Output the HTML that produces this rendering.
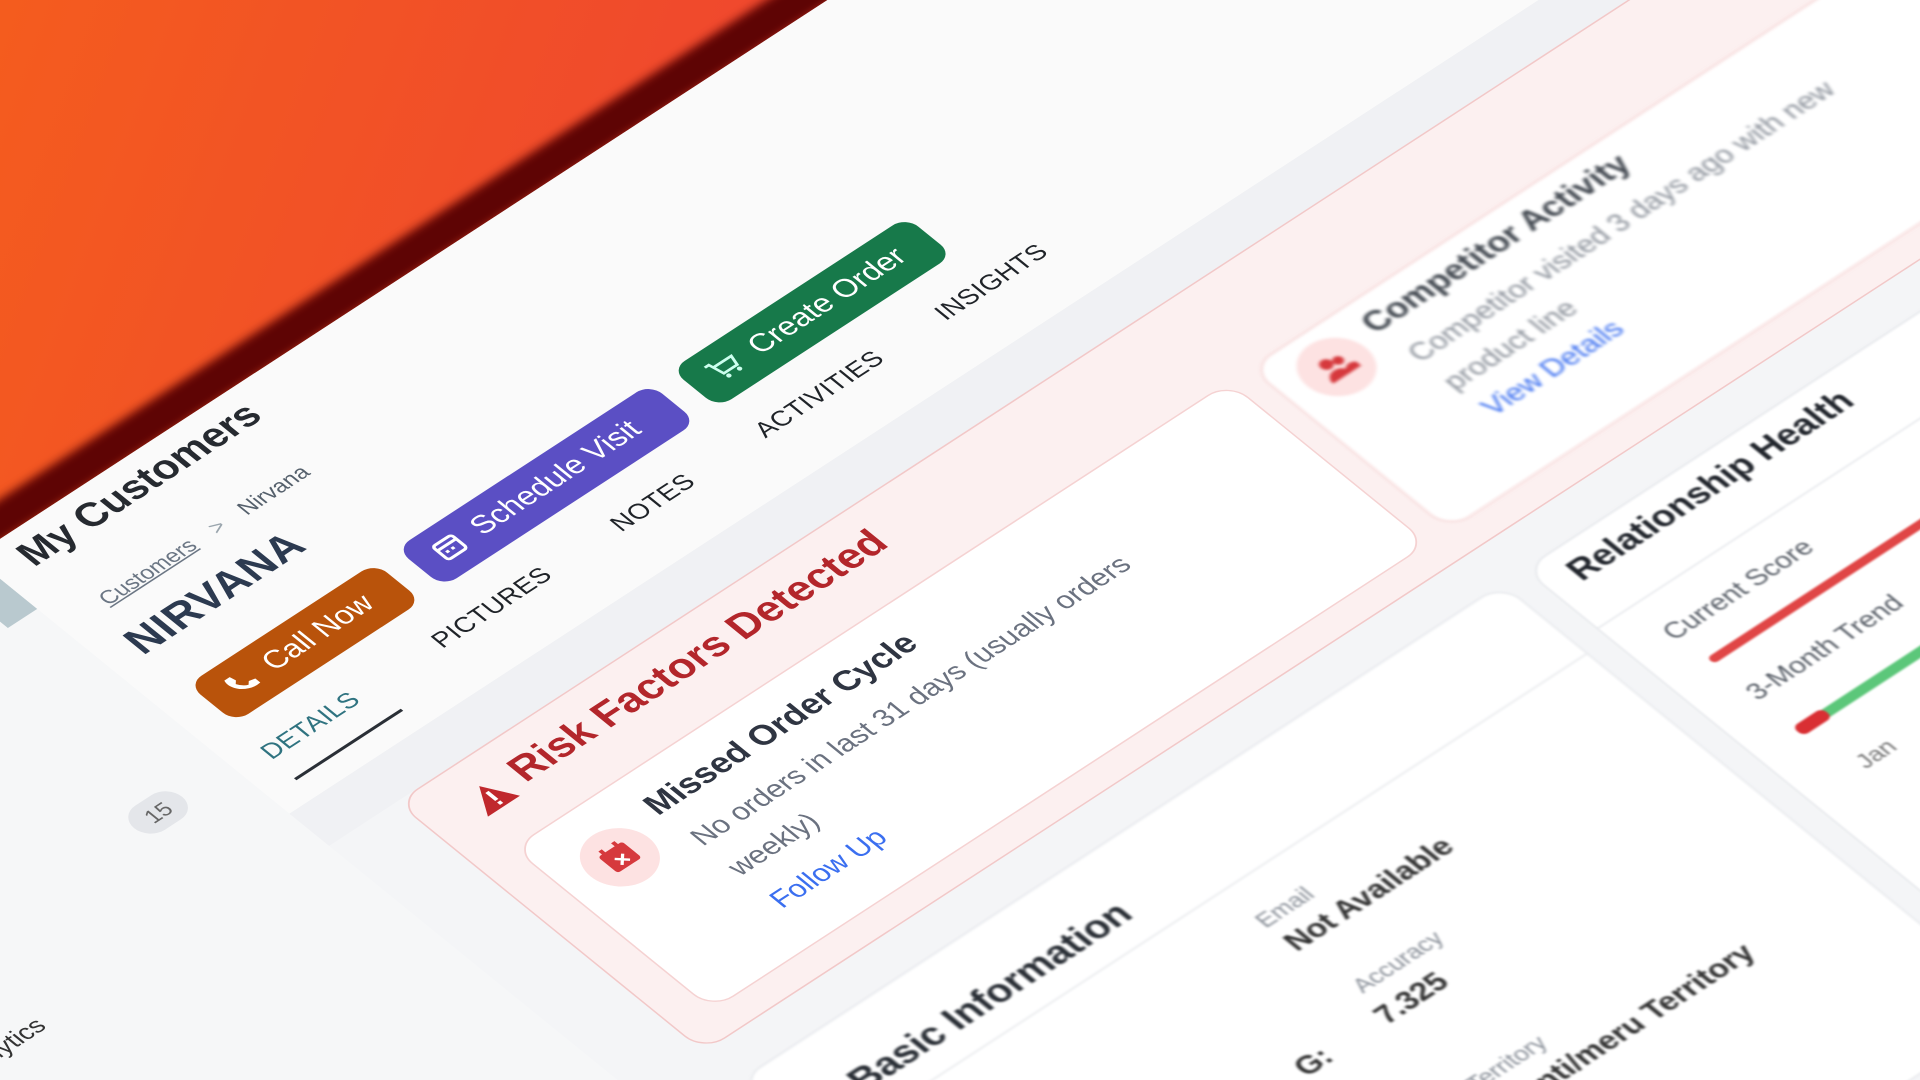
<!DOCTYPE html>
<html><head><meta charset="utf-8"><style>
html,body{margin:0;padding:0;width:1920px;height:1080px;overflow:hidden;background:#f04a2c;font-family:"Liberation Sans",sans-serif}
#clip{position:fixed;left:0;top:0;width:1920px;height:1080px;overflow:hidden;background:linear-gradient(110deg,#f45c1e 0%,#f04a2c 30%,#ee3a3c 60%,#ec3540 100%)}
#stage{position:absolute;left:0;top:0;width:1568px;height:882px;transform:scale(1.2245);transform-origin:0 0}
#page{position:absolute;left:30px;top:465px;width:0;height:0;transform:matrix(1.09,-0.71,1.01,0.82,0,0);transform-origin:0 0}
#page div,#page span{position:absolute;white-space:nowrap}
.card{background:#fff;border:1px solid #e5e7eb;border-radius:16px}
.btn{height:38px;border-radius:10px;color:#fff;font-size:19px;line-height:38px;box-sizing:border-box;padding-left:14px}
.tab{font-size:16px;top:177px;color:#1f2328;letter-spacing:.3px}
</style></head><body>
<div id="clip"><div id="stage"><div id="page">
  <div style="left:-1600px;top:-52px;width:3800px;height:24px;background:#5e0404;filter:blur(3px)"></div>
  <div style="left:-1600px;top:-30px;width:3800px;height:2400px;background:#f4f5f7"></div>
  <div style="left:-1600px;top:-30px;width:1580px;height:2400px;background:#f6f7f8"></div>
  <div style="left:-42px;top:-12px;width:22px;height:34px;background:#b9c9cf"></div>
  <div style="left:-20px;top:-30px;width:2200px;height:256px;background:#fafafa;border-bottom:1px solid #e6e8ec"></div>
  <div style="left:-20px;top:226px;width:2200px;height:32px;background:#f0f1f4"></div>

  <div style="left:0;top:-24px;font-size:25px;font-weight:bold;color:#262a30">My Customers</div>
  <div style="left:11px;top:33px;font-size:14px;color:#6b7684"><span style="position:static;text-decoration:underline">Customers</span><span style="position:static;color:#9aa5ad;margin:0 14px">&gt;</span><span style="position:static;color:#55606c">Nirvana</span></div>
  <div style="left:0;top:62px;font-size:27px;font-weight:bold;color:#2c3a50;letter-spacing:.5px">NIRVANA</div>

  <div class="btn" style="left:4px;top:118px;width:140px;background:#b9530b"><svg style="vertical-align:-3px" width="18" height="18" viewBox="0 0 18 18"><path d="M3 2 L7 2 L8 6 L6 8 Q8 12 11 13 L13 11 L17 12 L17 16 Q10 17 5 12 Q1 7 3 2 Z" fill="#fff"/></svg>&nbsp; Call Now</div>
  <div class="btn" style="left:160px;top:118px;width:190px;background:#5b4fc4"><svg style="vertical-align:-3px" width="18" height="18" viewBox="0 0 18 18"><rect x="2" y="3" width="14" height="13" rx="2" fill="none" stroke="#fff" stroke-width="2"/><line x1="2" y1="7" x2="16" y2="7" stroke="#fff" stroke-width="2"/><rect x="5" y="10" width="2" height="2" fill="#fff"/><rect x="9" y="10" width="2" height="2" fill="#fff"/></svg>&nbsp; Schedule Visit</div>
  <div class="btn" style="left:366px;top:118px;width:176px;background:#17794a"><svg style="vertical-align:-3px" width="20" height="18" viewBox="0 0 20 18"><path d="M1 2 H4 L6 12 H16 L18 5 H5" fill="none" stroke="#cfe" stroke-width="1.8"/><circle cx="7" cy="15" r="1.5" fill="#cfe"/><circle cx="15" cy="15" r="1.5" fill="#cfe"/></svg>&nbsp; Create Order</div>

  <div class="tab" style="left:0;color:#2f7380">DETAILS</div>
  <div style="left:0;top:208px;width:80px;height:2px;background:#2a2f36"></div>
  <div class="tab" style="left:128px">PICTURES</div>
  <div class="tab" style="left:262px">NOTES</div>
  <div class="tab" style="left:370px">ACTIVITIES</div>
  <div class="tab" style="left:505px">INSIGHTS</div>

  <div style="left:-92px;top:166px;width:36px;height:24px;border-radius:12px;background:#e4e6ea;color:#666;font-size:14px;line-height:24px;text-align:center">15</div>
  <div style="left:-330px;top:244px;width:100px;text-align:right;font-size:16px;color:#333">Analytics</div>

  <div style="left:30px;top:258px;width:1130px;height:247px;background:#fcf0f0;border:1px solid #f2c8c8;border-radius:16px"></div>
  <div style="left:60px;top:278px"><svg width="26" height="22" viewBox="0 0 26 22"><path d="M13 1 L25 21 L1 21 Z" fill="#c0282d"/><rect x="12" y="7" width="2.4" height="8" fill="#fff"/><rect x="12" y="16.5" width="2.4" height="2.4" fill="#fff"/></svg></div>
  <div style="left:94px;top:270px;font-size:26px;font-weight:bold;color:#b3262b">Risk Factors Detected</div>

  <div class="card" style="left:55px;top:325px;width:535px;height:160px;border-color:#f5d2d2">
    <div style="left:17px;top:21px;width:44px;height:44px;border-radius:50%;background:#fde2e2"><svg style="position:absolute;left:12px;top:11px" width="20" height="20" viewBox="0 0 20 20"><rect x="1" y="3" width="18" height="16" rx="2" fill="#d6393d"/><rect x="4" y="0" width="2.5" height="5" fill="#d6393d"/><rect x="13.5" y="0" width="2.5" height="5" fill="#d6393d"/><path d="M7 10 L13 16 M13 10 L7 16" stroke="#fff" stroke-width="1.8"/></svg></div>
    <div style="left:76px;top:16px;font-size:21px;font-weight:bold;color:#2f3542">Missed Order Cycle</div>
    <div style="left:79px;top:46px;font-size:18px;line-height:30px;color:#6b7280;white-space:normal;width:380px">No orders in last 31 days (usually orders weekly)</div>
    <div style="left:80px;top:114px;font-size:18px;color:#3b6ff0">Follow Up</div>
  </div>

  <div class="card" style="left:607px;top:325px;width:535px;height:160px;border-color:#f5d2d2;filter:blur(1px)">
    <div style="left:14px;top:8px;width:44px;height:44px;border-radius:50%;background:#fde2e2"><svg style="position:absolute;left:11px;top:11px" width="22" height="22" viewBox="0 0 22 22"><circle cx="8" cy="6" r="4" fill="#d6393d"/><circle cx="15" cy="8" r="3.3" fill="#d6393d"/><path d="M1 19 a7 7 0 0 1 14 0 Z" fill="#d6393d"/><path d="M12 19 a6 6 0 0 1 10 -4 V19 Z" fill="#d6393d"/></svg></div>
    <div style="left:69px;top:8px;font-size:21px;font-weight:bold;color:#444a52">Competitor Activity</div>
    <div style="left:73px;top:38px;font-size:18px;line-height:28px;color:#8a9099;white-space:normal;width:350px">Competitor visited 3 days ago with new product line</div>
    <div style="left:76px;top:98px;font-size:18px;color:#3b6ff0">View Details</div>
  </div>

  <div class="card" style="left:618px;top:535px;width:560px;height:420px;filter:blur(.6px)">
    <div style="left:17px;top:7px;font-size:22px;font-weight:bold;color:#23272e">Relationship Health</div>
    <div style="left:0;top:58px;width:560px;height:1px;background:#e6e8ec"></div>
    <div style="left:25px;top:78px;font-size:17px;color:#5a6069">Current Score</div>
    <div style="left:30px;top:114px;width:520px;height:6px;border-radius:3px;background:#e04646"></div>
    <div style="left:29px;top:141px;font-size:17px;color:#5a6069">3-Month Trend</div>
    <div style="left:33px;top:184px;width:520px;height:7px;border-radius:3px;background:#5cc77a"></div>
    <div style="left:30px;top:183px;width:22px;height:9px;border-radius:4px;background:#d92f33"></div>
    <div style="left:39px;top:220px;font-size:15px;color:#777">Jan</div>
  </div>

  <div class="card" style="left:30px;top:535px;width:570px;height:420px;filter:blur(.8px)">
    <div style="left:45px;top:30px;font-size:24px;font-weight:bold;color:#2a2f36">Basic Information</div>
    <div style="left:0;top:68px;width:570px;height:1px;background:#e6e8ec"></div>
    <div style="left:296px;top:92px;font-size:15px;color:#8a9099">Email</div>
    <div style="left:297px;top:113px;font-size:19px;font-weight:bold;color:#333">Not Available</div>
    <div style="left:303px;top:163px;font-size:15px;color:#8a9099">Accuracy</div>
    <div style="left:297px;top:186px;font-size:19px;font-weight:bold;color:#333">7.325</div>
    <div style="left:237px;top:186px;font-size:19px;font-weight:bold;color:#333">G:</div>
    <div style="left:300px;top:258px;font-size:15px;color:#8a9099">Territory</div>
    <div style="left:297px;top:280px;font-size:19px;font-weight:bold;color:#333">Imenti/meru Territory</div>
  </div>
</div></div></div>
</body></html>
